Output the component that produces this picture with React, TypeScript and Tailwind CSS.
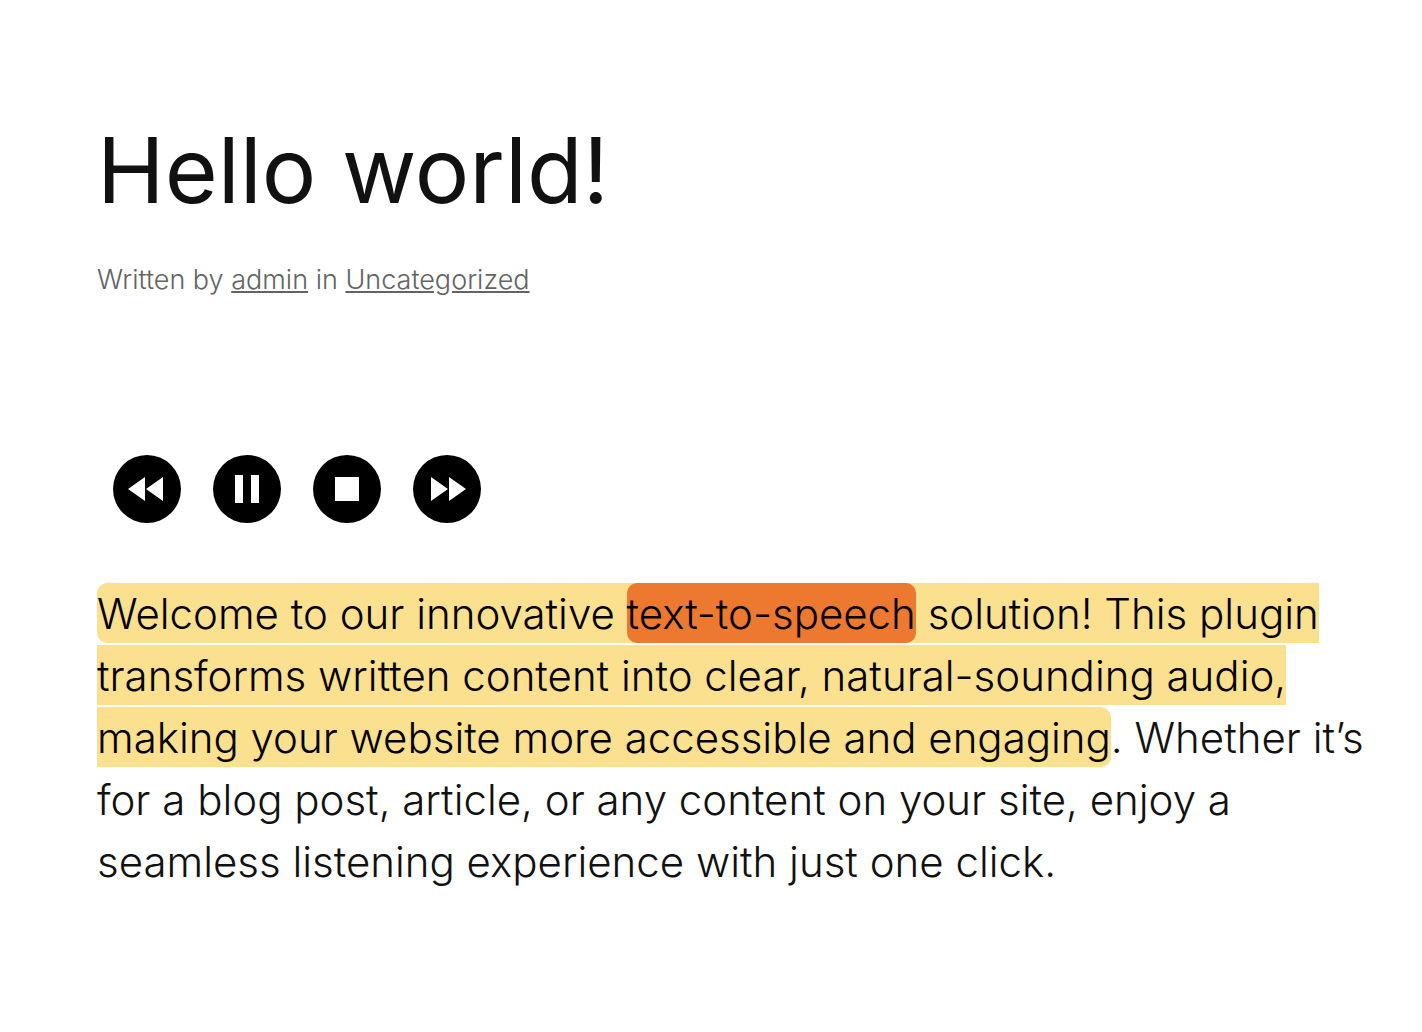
interface ControlProps {
    label: string;
    path: string;
}

const controls: ControlProps[] = [
    { label: "Previous", path: "M32 22v24L15 34zM50 22v24L33 34z" },
    { label: "Pause", path: "M22 20h8v28h-8zM38 20h8v28h-8z" },
    { label: "Stop", path: "M22 22h24v24H22z" },
    { label: "Next", path: "M18 22l17 12-17 12zM36 22l17 12-17 12z" },
]

function ControlButton({ label, path }: ControlProps) {
    return (
        <button type="button" aria-label={label} className="size-[68px] rounded-full bg-black text-white">
            <svg viewBox="0 0 68 68" fill="currentColor" className="size-full">
                <path d={path} />
            </svg>
        </button>
    )
}

export default function App() {
    return (
        <main className="min-h-screen bg-white pl-[97px] pr-6 pt-[110px] font-['Inter',sans-serif] text-[#111111]">
            <h1 className="text-[91px] leading-[120px]">Hello world!</h1>

            <p className="mt-8 text-[27px] font-light leading-9 text-[#636363]">
                Written by <a href="#admin" className="underline">admin</a> in{" "}
                <a href="#uncategorized" className="underline">Uncategorized</a>
            </p>

            {/* Player controls */}
            <div className="mt-[157px] flex gap-8 pl-4">
                {controls.map((control) => (
                    <ControlButton key={control.label} {...control} />
                ))}
            </div>

            <p className="mt-[60px] text-[42px] font-light leading-[62px]">
                <mark className="rounded-[10px] bg-[#fae08f] pb-1 pt-[5px] text-black">
                    Welcome to our innovative{" "}
                    <mark className="rounded-[10px] bg-[#ed7830] pb-1 pt-[5px] text-black">text-to-speech</mark>
                    {" "}solution! This plugin
                    <br />
                    transforms written content into clear, natural-sounding audio,
                    <br />
                    making your website more accessible and engaging
                </mark>
                . Whether it’s
                <br />
                for a blog post, article, or any content on your site, enjoy a
                <br />
                seamless listening experience with just one click.
            </p>
        </main>
    )
}
